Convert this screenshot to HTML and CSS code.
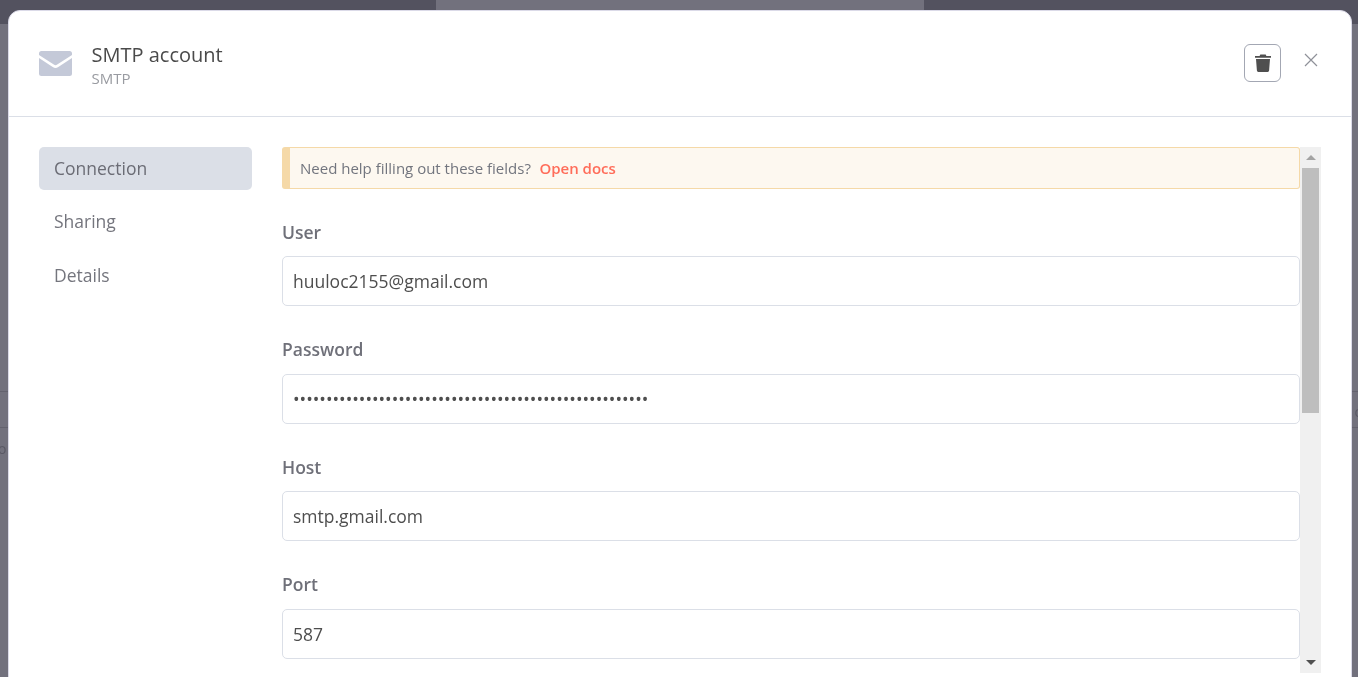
FILE: index.html
```html
<!DOCTYPE html>
<html lang="en">
<head>
<meta charset="utf-8">
<title>SMTP account</title>
<link rel="stylesheet" href="styles.css">
</head>
<body>
<div class="backdrop">
  <div class="backdrop-top"><div class="backdrop-tab"></div></div>
  <div class="backdrop-line line-a"></div>
  <div class="backdrop-line line-b"></div>
  <span class="backdrop-letter letter-left">o</span>
  <span class="backdrop-letter letter-right">o</span>
</div>
<main class="modal">
  <header class="modal-header">
    <svg class="mail-icon" viewBox="0 0 33 25" width="33" height="25" aria-hidden="true">
      <path class="mail-fill" d="M2.5 0h28A2.5 2.5 0 0 1 33 2.5v1.4L18.2 13.6a3.2 3.2 0 0 1-3.4 0L0 3.9V2.500A2.500 2.500 0 0 1 2.500 0Z"/>
      <path class="mail-fill" d="M0 7.100 13.700 16a5 5 0 0 0 5.600 0L33 7.100V22.500a2.500 2.500 0 0 1-2.500 2.500h-28A2.500 2.500 0 0 1 0 22.500Z"/>
    </svg>
    <div class="titles">
      <div class="title">SMTP account</div>
      <div class="subtitle">SMTP</div>
    </div>
    <button class="trash-button" type="button" aria-label="Delete">
      <svg viewBox="0 0 16 18" width="16" height="18" aria-hidden="true">
        <path class="trash-fill" d="M5.300.6h5.400l.7 1.300H16v1.900H0V1.900h4.600ZM1 5h14l-.9 11.600a1.400 1.400 0 0 1-1.400 1.300H3.300a1.400 1.400 0 0 1-1.400-1.300Z"/>
      </svg>
    </button>
    <button class="close-button" type="button" aria-label="Close">
      <svg viewBox="0 0 14 14" width="14" height="14" aria-hidden="true">
        <path class="close-stroke" d="M1 1l12 12M13 1 1 13"/>
      </svg>
    </button>
  </header>
  <div class="modal-body">
    <nav class="sidebar">
      <a class="nav-item active">Connection</a>
      <a class="nav-item">Sharing</a>
      <a class="nav-item">Details</a>
    </nav>
    <div class="panel">
      <div class="form">
        <div class="callout">
          <span>Need help filling out these fields?</span>
          <a class="docs-link">Open docs</a>
        </div>
        <label class="field">
          <span class="field-label">User</span>
          <input class="field-input" type="text" value="huuloc2155@gmail.com">
        </label>
        <label class="field">
          <span class="field-label">Password</span>
          <input class="field-input" type="password" value="xxxxxxxxxxxxxxxxxxxxxxxxxxxxxxxxxxxxxxxxxxxxxxxxxxxxxx">
        </label>
        <label class="field">
          <span class="field-label">Host</span>
          <input class="field-input" type="text" value="smtp.gmail.com">
        </label>
        <label class="field">
          <span class="field-label">Port</span>
          <input class="field-input" type="text" value="587">
        </label>
      </div>
      <div class="scrollbar" aria-hidden="true">
        <div class="arrow arrow-up"></div>
        <div class="thumb"></div>
        <div class="track"></div>
        <div class="arrow arrow-down"></div>
      </div>
    </div>
  </div>
</main>
</body>
</html>
```
FILE: styles.css
```css
* { box-sizing: border-box; }

html, body {
  height: 100%;
  margin: 0;
  overflow: hidden;
}

body {
  background: #72717d;
  font-family: "Open Sans", sans-serif;
  color: #555;
}

.backdrop {
  position: fixed;
  inset: 0;
}

.backdrop-top {
  height: 24px;
  background: #53525f;
  display: flex;
  justify-content: center;
}

.backdrop-tab {
  width: 488px;
  margin-left: 1px;
  height: 24px;
  background: #72717d;
  border-radius: 0 0 3px 3px;
}

.backdrop-line {
  position: absolute;
  left: 0;
  right: 0;
  height: 1px;
  background: #63626e;
}

.line-a { top: 391px; }
.line-b { top: 427px; }

.backdrop-letter {
  position: absolute;
  top: 440px;
  font-size: 14px;
  line-height: 18px;
  color: #5a5965;
}

.letter-left { left: -2px; }
.letter-right { right: -5px; top: 403px; }

.modal {
  position: fixed;
  left: 8px;
  right: 6px;
  top: 10px;
  bottom: -20px;
  background: #fff;
  border: 1px solid #dbdae8;
  border-radius: 12px;
  display: flex;
  flex-direction: column;
}

.modal-header {
  height: 106px;
  flex: none;
  display: flex;
  align-items: center;
  padding: 0 31px 0 30px;
  border-bottom: 1px solid #dbdfe7;
}

.mail-icon {
  flex: none;
  margin-top: -1px;
}

.mail-fill { fill: #c4c9d8; }

.titles {
  margin-left: 19.5px;
  flex: 1;
  margin-top: 3px;
}

.title {
  font-size: 20px;
  line-height: 26px;
  color: #4a4a4a;
}

.subtitle {
  font-size: 15px;
  line-height: 20px;
  color: #999ba1;
}

.trash-button {
  width: 37px;
  height: 38px;
  padding: 0;
  background: #fff;
  border: 1px solid #a3a7b3;
  border-radius: 6px;
  display: flex;
  align-items: center;
  justify-content: center;
  margin-top: -1px;
}

.trash-fill { fill: #4f4f4f; }

.close-button {
  width: 16px;
  height: 16px;
  padding: 0;
  margin-left: 22px;
  margin-right: 1px;
  margin-top: -7px;
  background: none;
  border: 0;
  display: flex;
  align-items: center;
  justify-content: center;
}

.close-stroke {
  stroke: #8f9199;
  stroke-width: 1.2;
  fill: none;
}

.modal-body {
  flex: 1;
  min-height: 0;
  display: flex;
  padding: 30px 30px 0 30px;
}

.sidebar {
  width: 213px;
  flex: none;
  display: flex;
  flex-direction: column;
  gap: 10.4px;
}

.nav-item {
  height: 43px;
  padding: 0 15px 1px;
  display: flex;
  align-items: center;
  border-radius: 5px;
  font-size: 17.5px;
  color: #74757d;
}

.active {
  background: #dbdfe7;
  color: #6b6c75;
}

.panel {
  width: 1039px;
  margin-left: 30px;
  height: 527px;
  display: flex;
  align-items: flex-start;
}

.form {
  width: 1018px;
  flex: none;
  display: flex;
  flex-direction: column;
}

.callout {
  height: 42px;
  padding-left: 10px;
  display: flex;
  align-items: center;
  gap: 8.500px;
  background: #fdf8f0;
  border: 1px solid #f5d9a8;
  border-left: 8px solid #f5d9a8;
  border-radius: 3px;
  font-size: 15px;
  color: #72757e;
}

.docs-link {
  color: #ff6d5a;
  font-weight: 600;
}

.field {
  display: flex;
  flex-direction: column;
  margin-top: 32px;
}

.callout + .field { margin-top: 31.5px; }

.field-label {
  height: 35.5px;
  font-size: 17.5px;
  line-height: 22px;
  font-weight: 600;
  color: #6f7079;
}

.field-input {
  width: 100%;
  height: 50px;
  padding: 0 10px;
  border: 1px solid #dbdfe7;
  border-radius: 5px;
  background: #fff;
  font-family: "Open Sans", sans-serif;
  font-size: 17.5px;
  color: #4e4e4e;
  outline: none;
}

.scrollbar {
  width: 21px;
  height: 526px;
  flex: none;
  background: #f0f0f0;
  display: flex;
  flex-direction: column;
  align-items: center;
}

.arrow {
  flex: none;
  width: 100%;
  height: 21px;
  display: flex;
  align-items: center;
  justify-content: center;
}

.arrow::before {
  content: "";
  border-left: 5px solid transparent;
  border-right: 5px solid transparent;
}

.arrow-up::before { border-bottom: 5px solid #a3a3a3; }
.arrow-down::before { border-top: 5px solid #505050; }

.thumb {
  width: 17px;
  height: 245px;
  background: #bebebe;
  flex: none;
}

.track { flex: 1; }
```
